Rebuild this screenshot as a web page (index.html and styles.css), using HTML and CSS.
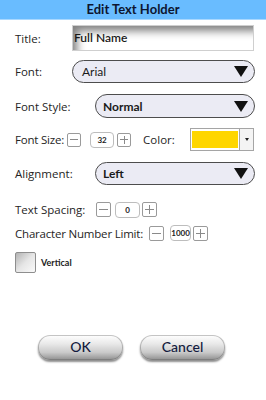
FILE: index.html
```html
<!DOCTYPE html>
<html>
<head>
<meta charset="utf-8">
<link rel="stylesheet" href="styles.css">
</head>
<body>
<div class="dialog">
  <div class="header">Edit Text Holder</div>
  <div class="form">
    <div class="row r-title">
      <span class="label w-short">Title:</span>
      <div class="textbox">Full Name</div>
    </div>
    <div class="row r-font">
      <span class="label w-short">Font:</span>
      <div class="select s-font"><span class="sel-text">Arial</span><span class="tri"></span></div>
    </div>
    <div class="row r-style">
      <span class="label w-long">Font Style:</span>
      <div class="select s-wide"><span class="sel-text bold">Normal</span><span class="tri"></span></div>
    </div>
    <div class="row r-size">
      <span class="label tight">Font Size:</span>
      <div class="spin sp-size">
        <span class="sbtn minus"></span>
        <span class="sval">32</span>
        <span class="sbtn plus"></span>
      </div>
      <span class="label color-label">Color:</span>
      <div class="colorbox">
        <span class="swatch"></span>
        <span class="cdrop"><span class="mini-tri"></span></span>
      </div>
    </div>
    <div class="row r-align">
      <span class="label w-long">Alignment:</span>
      <div class="select s-wide"><span class="sel-text bold">Left</span><span class="tri"></span></div>
    </div>
    <div class="row r-spacing">
      <span class="label w-long">Text Spacing:</span>
      <div class="spin">
        <span class="sbtn minus"></span>
        <span class="sval">0</span>
        <span class="sbtn plus"></span>
      </div>
    </div>
    <div class="row r-limit">
      <span class="label tight">Character Number Limit:</span>
      <div class="spin sp-limit">
        <span class="sbtn minus"></span>
        <span class="sval">1000</span>
        <span class="sbtn plus"></span>
      </div>
    </div>
    <div class="row r-check">
      <span class="checkbox"></span>
      <span class="check-label">Vertical</span>
    </div>
  </div>
  <div class="buttons">
    <div class="btn">OK</div>
    <div class="btn">Cancel</div>
  </div>
</div>
</body>
</html>
```
FILE: styles.css
```css
* { box-sizing: border-box; }
html, body { margin: 0; padding: 0; background: #fff; }
body { width: 266px; height: 400px; font-family: "Open Sans", "Noto Sans", sans-serif; }

.dialog { width: 266px; }

.header {
  height: 20px;
  background: #69bcff;
  border-bottom: 1px solid #a9d8ff;
  color: #0d1530;
  font-family: Lato, sans-serif;
  font-weight: 700;
  font-size: 13px;
  line-height: 19px;
  text-align: center;
}

.form { padding-left: 15px; padding-right: 11px; display: flex; flex-direction: column; }

.row { display: flex; align-items: center; }
.label { font-size: 11.5px; color: #252525; white-space: nowrap; }
.label.tight { letter-spacing: -0.2px; }
.w-short { width: 57px; flex: none; }
.w-long { width: 80px; flex: none; }

.r-title { margin-top: 5px; height: 26px; }
.r-font { margin-top: 9px; height: 23px; }
.r-style { margin-top: 11px; height: 24px; }
.r-size { margin-top: 10px; height: 23px; }
.r-align { margin-top: 11px; height: 23px; }
.r-spacing { margin-top: 16px; height: 17px; }
.r-limit { margin-top: 7px; height: 16px; }
.r-check { margin-top: 11px; height: 21px; }

.textbox {
  width: 182px;
  height: 26px;
  border: 1px solid #cfcfcf;
  box-shadow: inset 7px 8px 9px -3px rgba(0,0,0,0.5);
  font-family: Lato, sans-serif;
  font-weight: 600;
  font-size: 12px;
  color: #1a1a1a;
  line-height: 24px;
  padding-left: 1px;
}

.select {
  height: 100%;
  border: 1.5px solid #4d4d4d;
  border-radius: 12px;
  background: #ebebf4;
  display: flex;
  align-items: center;
  justify-content: space-between;
  padding: 0 6px 0 9px;
}
.s-font { width: 183px; }
.s-wide { width: 160px; padding-left: 7px; }
.sel-text { font-family: Lato, sans-serif; font-size: 12px; color: #1a1a1a; }
.sel-text.bold { font-weight: 700; }
.tri {
  width: 0; height: 0;
  border-left: 7px solid transparent;
  border-right: 7px solid transparent;
  border-top: 11px solid #111;
}

.spin { display: flex; align-items: center; margin-left: 1px; }
.sbtn {
  width: 15px; height: 15px;
  border: 1px solid #9a9a9a;
  border-radius: 2px;
  background: #fff;
  position: relative;
  flex: none;
}
.sbtn::before {
  content: "";
  position: absolute;
  left: 2px; right: 2px; top: 6px;
  height: 1px;
  background: #8a8a8a;
}
.sbtn.plus::after {
  content: "";
  position: absolute;
  top: 2px; bottom: 2px; left: 6px;
  width: 1px;
  background: #8a8a8a;
}
.sval {
  width: 25px; height: 16px;
  margin: 0 2px 0 4px;
  border: 1px solid #bdbdbd;
  border-radius: 4px;
  font-family: Lato, sans-serif;
  font-weight: 700;
  font-size: 8px;
  line-height: 14px;
  text-align: center;
  color: #222;
}
.sp-size { margin-left: 3px; }
.sp-size .sbtn { width: 14px; height: 14px; }
.sp-size .sbtn::before { top: 5.5px; }
.sp-size .sbtn.plus::after { left: 5.5px; }
.sp-size .sval { width: 24px; margin: 0 3px 0 9px; }
.sp-limit { margin-left: 6px; }
.sp-limit .sval { width: 21px; margin: 0 2px 0 6px; }

.color-label { margin-left: 12px; width: 47px; }
.colorbox {
  width: 64px; height: 23px;
  border: 1px solid #a5a5a5;
  background: #fff;
  display: flex;
  align-items: stretch;
}
.swatch { flex: 1; margin: 2px 1px 2px 1px; background: #ffd600; }
.cdrop {
  width: 14px;
  border-left: 1px solid #a5a5a5;
  background: #f4f4f4;
  display: flex; align-items: center; justify-content: center;
}
.mini-tri {
  width: 0; height: 0;
  border-left: 2.5px solid transparent;
  border-right: 2.5px solid transparent;
  border-top: 3px solid #222;
}

.checkbox {
  width: 21px; height: 21px;
  border: 1px solid #8e8e8e;
  border-radius: 2px;
  background: linear-gradient(135deg, #b3b3b3 0%, #e6e6e6 50%, #fafafa 100%);
}
.check-label {
  margin-left: 5px;
  font-family: Lato, sans-serif;
  font-weight: 700;
  font-size: 9px;
  color: #222;
}

.buttons {
  margin-top: 62px;
  display: flex;
  gap: 17px;
  padding-left: 38px;
}
.btn {
  width: 85px; height: 25px;
  border-radius: 12px;
  background: linear-gradient(#ffffff 0%, #e9e9e9 35%, #c9c9c9 70%, #8f8f8f 100%);
  box-shadow: 0 2px 2px rgba(0,0,0,0.45), inset 0 0 0 1px rgba(90,90,90,0.35);
  text-align: center;
  font-family: Lato, sans-serif;
  font-size: 14px;
  font-weight: 500;
  line-height: 23px;
  color: #121a3e;
}
```
